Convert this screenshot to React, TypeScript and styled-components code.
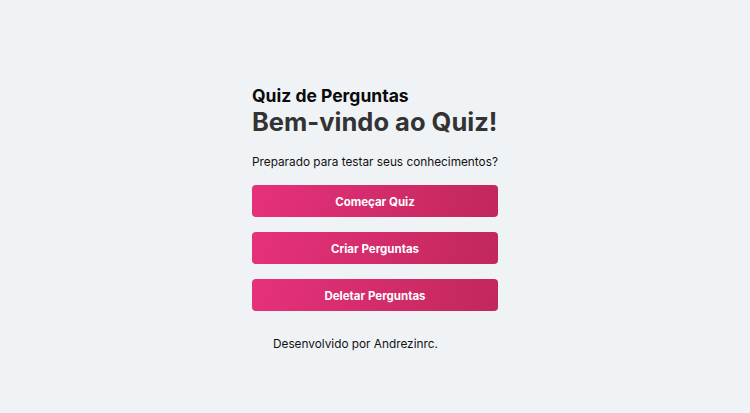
import React from "react";
import styled, { createGlobalStyle } from "styled-components";

const Global = createGlobalStyle`
  html, body { margin: 0; padding: 0; }
  body {
    background: #f0f3f6;
    font-family: Inter, "Noto Sans", sans-serif;
    color: #111;
  }
`;

const Page = styled.main`
  min-height: 413px;
  display: flex;
  justify-content: center;
  padding-top: 85px;
  box-sizing: border-box;
`;

const Card = styled.section`
  width: 246px;
  display: flex;
  flex-direction: column;
  white-space: nowrap;
`;

const Title = styled.h2`
  margin: 0;
  font-size: 17.5px;
  font-weight: 700;
  line-height: 22px;
  color: #0a0a0a;
`;

const Heading = styled.h1`
  margin: 0;
  font-size: 25.5px;
  font-weight: 700;
  line-height: 30px;
  color: #333333;
`;

const Lead = styled.p`
  margin: 16px 0 14px;
  font-size: 11.8px;
  line-height: 18px;
  color: #111;
`;

const Actions = styled.div`
  display: flex;
  flex-direction: column;
  gap: 15px;
`;

const Button = styled.button`
  height: 32px;
  width: 100%;
  border: none;
  border-radius: 4px;
  background: linear-gradient(110deg, #e6317b 0%, #c1275c 100%);
  color: #fff;
  font-family: Inter, "Noto Sans", sans-serif;
  font-size: 11.5px;
  font-weight: 700;
  padding: 1px 0 0;
  cursor: pointer;
`;

const Footer = styled.p`
  margin: 24px 0 0 21px;
  font-size: 11.8px;
  line-height: 18px;
  color: #111;
`;

export default function App() {
  return (
    <>
      <Global />
      <Page>
        <Card>
          <Title>Quiz de Perguntas</Title>
          <Heading>Bem-vindo ao Quiz!</Heading>
          <Lead>Preparado para testar seus conhecimentos?</Lead>
          <Actions>
            <Button>Começar Quiz</Button>
            <Button>Criar Perguntas</Button>
            <Button>Deletar Perguntas</Button>
          </Actions>
          <Footer>Desenvolvido por Andrezinrc.</Footer>
        </Card>
      </Page>
    </>
  );
}
